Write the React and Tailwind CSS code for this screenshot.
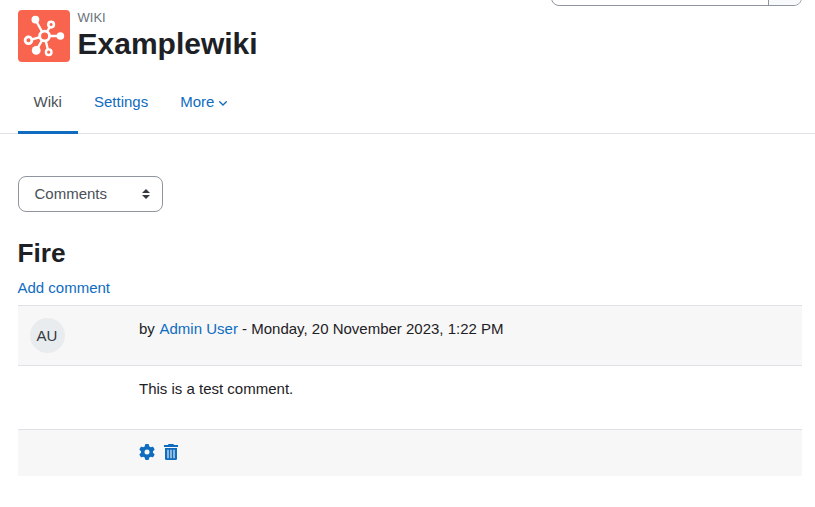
import React from 'react';

const tabs = [
  { label: 'Wiki', active: true },
  { label: 'Settings' },
  { label: 'More', menu: true },
];

const WikiLogo = () => (
  <svg viewBox="0 0 52 52" className="w-[52px] h-[52px] rounded bg-[#f9644e]" fill="none" stroke="white" strokeWidth="2.4">
    <path d="M26.5 26 17.3 9.5M26.5 26 33.2 14.5M26.5 26H42M26.5 26 30.5 42M26.5 26 18.3 40.4M26.5 26 10.3 30.3" />
    <g fill="white" stroke="none">
      <circle cx="17.4" cy="9.6" r="3.9" />
      <circle cx="42.4" cy="26" r="3.8" />
      <circle cx="18.2" cy="40.4" r="4.4" />
    </g>
    <g fill="#f9644e">
      <circle cx="26.6" cy="26" r="4.9" strokeWidth="2.8" />
      <circle cx="33.1" cy="14.6" r="2.8" strokeWidth="2.6" />
      <circle cx="30.7" cy="42.2" r="2.8" strokeWidth="2.4" />
      <circle cx="10.5" cy="30.3" r="3.4" strokeWidth="2.8" />
    </g>
  </svg>
);

const GearIcon = () => (
  <svg viewBox="0 0 512 512" className="w-4 h-4" fill="currentColor">
    <path d="M495.9 166.6c3.2 8.7 .5 18.4-6.4 24.6l-43.3 39.4c1.1 8.3 1.7 16.8 1.7 25.4s-.6 17.1-1.7 25.4l43.3 39.4c6.9 6.2 9.6 15.9 6.4 24.6c-4.4 11.9-9.7 23.3-15.8 34.3l-4.7 8.1c-6.6 11-14 21.4-22.1 31.2c-5.9 7.2-15.7 9.6-24.5 6.8l-55.7-17.7c-13.4 10.3-28.2 18.9-44 25.4l-12.5 57.1c-2 9.1-9 16.3-18.2 17.8c-13.8 2.3-28 3.5-42.5 3.5s-28.7-1.2-42.5-3.5c-9.2-1.5-16.2-8.7-18.2-17.8l-12.5-57.1c-15.8-6.5-30.6-15.1-44-25.4L83.1 425.9c-8.8 2.8-18.6 .3-24.5-6.8c-8.1-9.8-15.5-20.2-22.1-31.2l-4.7-8.1c-6.1-11-11.4-22.4-15.8-34.3c-3.2-8.7-.5-18.4 6.4-24.6l43.3-39.4C64.6 273.1 64 264.6 64 256s.6-17.1 1.7-25.4L22.4 191.2c-6.9-6.2-9.6-15.9-6.4-24.6c4.4-11.9 9.7-23.3 15.8-34.3l4.7-8.1c6.6-11 14-21.4 22.1-31.2c5.9-7.2 15.7-9.6 24.5-6.8l55.7 17.7c13.4-10.3 28.2-18.9 44-25.4l12.5-57.1c2-9.1 9-16.3 18.2-17.8C227.3 1.2 241.5 0 256 0s28.7 1.2 42.5 3.5c9.2 1.5 16.2 8.7 18.2 17.8l12.5 57.1c15.8 6.5 30.6 15.1 44 25.4l55.7-17.7c8.8-2.8 18.6-.3 24.5 6.8c8.1 9.8 15.5 20.2 22.1 31.2l4.7 8.1c6.1 11 11.4 22.4 15.8 34.3zM256 336a80 80 0 1 0 0-160 80 80 0 1 0 0 160z" />
  </svg>
);

const TrashIcon = () => (
  <svg viewBox="0 0 14 16" className="w-[14px] h-4" fill="currentColor">
    <path d="M4.2.5 4.7 0h4.6l.5.5.3.5H14v2H0V1h3.9z" />
    <path d="M1 4h12v10.5A1.5 1.5 0 0 1 11.5 16h-9A1.5 1.5 0 0 1 1 14.5z" />
    <path d="M4 5.8v8.4M7 5.8v8.4M10 5.8v8.4" stroke="#e4eaf1" strokeWidth="1.2" />
  </svg>
);

const App = () => {
  return (
    <div className="h-[507px] overflow-hidden bg-white font-['Liberation_Sans',Arial,sans-serif] text-[15px] leading-[22.5px] text-[#1d2125]">
      {/* Page header */}
      <header className="flex justify-between pl-[18px] pr-[13px] h-[70px]">
        <div className="flex gap-[7.5px] pt-[10px]">
          <WikiLogo />
          <div>
            <div className="text-[13px] leading-[15px] text-[#6a737b] uppercase">Wiki</div>
            <h1 className="mt-px text-[30px] leading-[36px] font-bold">Examplewiki</h1>
          </div>
        </div>
        <div className="flex w-[251px] h-9 -mt-[30px] border border-[#8f959e] rounded-lg overflow-hidden">
          <div className="flex-1"></div>
          <div className="w-[33px] border-l border-[#8f959e] bg-[#f8f9fa]"></div>
        </div>
      </header>

      {/* Secondary navigation */}
      <nav className="flex h-16 pl-[18px] border-b border-[#dee2e6]">
        {tabs.map((tab) => (
          <a
            key={tab.label}
            className={
              tab.active
                ? 'flex items-center w-[60px] pl-[15.5px] h-16 border-b-3 border-[#0f6cbf] pt-[3px] text-[#495057]'
                : 'flex items-center px-4 h-16 border-b-3 border-transparent pt-[3px] text-[#0f6cbf]'
            }
          >
            {tab.label}
            {tab.menu && (
              <svg viewBox="0 0 8 5" className="ml-[5px] mt-[3px] w-2 h-[5px]" fill="none" stroke="currentColor" strokeWidth="1.3" strokeLinecap="round">
                <path d="M.7.7 4 4 7.3.7" />
              </svg>
            )}
          </a>
        ))}
      </nav>

      <main className="pl-[17.5px] pr-[13px] pt-[42px]">
        <div className="flex items-center justify-between w-[145px] h-9 pl-4 pr-3 border border-[#8f959e] rounded-lg text-[#495057]">
          Comments
          <svg viewBox="0 0 8 10" className="w-2 h-[10px]" fill="#343a40">
            <path d="M4 0 0 4h8zM4 10 0 6h8z" />
          </svg>
        </div>

        <h2 className="mt-[25px] text-[26.25px] leading-[32px] font-bold">Fire</h2>
        <a className="block mt-2 text-[#0f6cbf]">Add comment</a>

        {/* Comment */}
        <div className="mt-[5px]">
          <div className="flex h-[60px] border-t border-[#dee2e6] bg-[#f7f7f7] pt-3">
            <div className="w-[121.5px] pl-3">
              <div className="w-[35px] h-[35px] pt-[2px] rounded-full bg-[#e9ecef] flex items-center justify-center text-[#343a40]">AU</div>
            </div>
            <div>
              by <a className="ml-[0.5px] text-[#0f6cbf]">Admin User</a> - Monday, 20 November 2023, 1:22 PM
            </div>
          </div>
          <div className="h-16 border-t border-[#dee2e6] pt-3 pl-[121.5px]">This is a test comment.</div>
          <div className="flex gap-[9px] h-[47px] border-t border-[#dee2e6] bg-[#f7f7f7] pt-[14px] pl-[121.5px] text-[#0f6cbf]">
            <GearIcon />
            <TrashIcon />
          </div>
        </div>
      </main>
    </div>
  );
};

export default App;
